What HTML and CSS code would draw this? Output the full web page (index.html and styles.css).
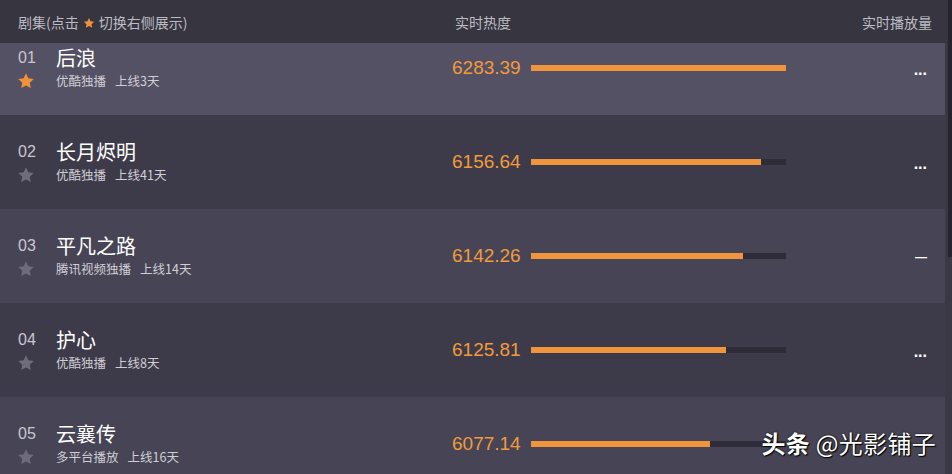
FILE: index.html
```html
<!DOCTYPE html>
<html lang="zh">
<head>
<meta charset="utf-8">
<title>剧集实时热度</title>
<link rel="stylesheet" href="styles.css">
</head>
<body>
<div class="board">
  <div class="head">
    <div class="h-name">剧集(点击<svg class="h-star" viewBox="0 0 24 24"><path d="M12 1.8l3.1 6.6 7.2.9-5.3 5 1.4 7.1L12 17.9l-6.4 3.5 1.4-7.1-5.3-5 7.2-.9z"/></svg>切换右侧展示)</div>
    <div class="h-heat">实时热度</div>
    <div class="h-play">实时播放量</div>
  </div>
  <div class="list">
    <div class="rows">
      <div class="row row-first row-sel">
        <div class="rank"><span class="num">01</span><svg class="star on" viewBox="0 0 24 24"><path d="M12 1.8l3.1 6.6 7.2.9-5.3 5 1.4 7.1L12 17.9l-6.4 3.5 1.4-7.1-5.3-5 7.2-.9z"/></svg></div>
        <div class="info"><div class="title">后浪</div><div class="sub">优酷独播<span class="days">上线3天</span></div></div>
        <div class="score">6283.39</div>
        <div class="bar"><div class="fill" style="width:255px"></div></div>
        <div class="play">...</div>
      </div>
      <div class="row row-even">
        <div class="rank"><span class="num">02</span><svg class="star" viewBox="0 0 24 24"><path d="M12 1.8l3.1 6.6 7.2.9-5.3 5 1.4 7.1L12 17.9l-6.4 3.5 1.4-7.1-5.3-5 7.2-.9z"/></svg></div>
        <div class="info"><div class="title">长月烬明</div><div class="sub">优酷独播<span class="days">上线41天</span></div></div>
        <div class="score">6156.64</div>
        <div class="bar"><div class="fill" style="width:230px"></div></div>
        <div class="play">...</div>
      </div>
      <div class="row row-odd">
        <div class="rank"><span class="num">03</span><svg class="star" viewBox="0 0 24 24"><path d="M12 1.8l3.1 6.6 7.2.9-5.3 5 1.4 7.1L12 17.9l-6.4 3.5 1.4-7.1-5.3-5 7.2-.9z"/></svg></div>
        <div class="info"><div class="title">平凡之路</div><div class="sub">腾讯视频独播<span class="days">上线14天</span></div></div>
        <div class="score">6142.26</div>
        <div class="bar"><div class="fill" style="width:212px"></div></div>
        <div class="play play-dash">—</div>
      </div>
      <div class="row row-even">
        <div class="rank"><span class="num">04</span><svg class="star" viewBox="0 0 24 24"><path d="M12 1.8l3.1 6.6 7.2.9-5.3 5 1.4 7.1L12 17.9l-6.4 3.5 1.4-7.1-5.3-5 7.2-.9z"/></svg></div>
        <div class="info"><div class="title">护心</div><div class="sub">优酷独播<span class="days">上线8天</span></div></div>
        <div class="score">6125.81</div>
        <div class="bar"><div class="fill" style="width:195px"></div></div>
        <div class="play">...</div>
      </div>
      <div class="row row-odd">
        <div class="rank"><span class="num">05</span><svg class="star" viewBox="0 0 24 24"><path d="M12 1.8l3.1 6.6 7.2.9-5.3 5 1.4 7.1L12 17.9l-6.4 3.5 1.4-7.1-5.3-5 7.2-.9z"/></svg></div>
        <div class="info"><div class="title">云襄传</div><div class="sub">多平台播放<span class="days">上线16天</span></div></div>
        <div class="score">6077.14</div>
        <div class="bar"><div class="fill" style="width:179px"></div></div>
        <div class="play"></div>
      </div>
    </div>
    <div class="track"></div>
  </div>
  <div class="thumb"></div>
  <div class="mark"><b>头条</b> @光影铺子</div>
</div>
</body>
</html>
```

FILE: styles.css
```css
* { box-sizing: border-box; }
html, body { margin: 0; padding: 0; }
body {
  width: 952px;
  height: 474px;
  overflow: hidden;
  background: #37353f;
  font-family: "Liberation Sans", "Noto Sans CJK SC", sans-serif;
}
.board {
  position: relative;
  width: 952px;
  height: 474px;
  display: flex;
  flex-direction: column;
}
.head {
  height: 43px;
  flex: none;
  display: flex;
  align-items: center;
  padding: 0 20px 0 18px;
  background: #37353f;
  color: #bdbcc4;
  font-family: "Noto Sans CJK SC", sans-serif;
  font-size: 14px;
}
.h-name { width: 437px; display: flex; align-items: center; }
.h-star { width: 12px; height: 12px; fill: #f0923a; margin: 2px 4px 0 4px; }
.h-heat { flex: 1; }
.h-play { text-align: right; }

.list {
  flex: 1;
  display: flex;
  overflow: hidden;
}
.rows {
  width: 945px;
  display: flex;
  flex-direction: column;
}
.track { flex: 1; background: #3a3845; }
.row {
  height: 94px;
  flex: none;
  display: flex;
  align-items: center;
  padding-left: 18px;
}
.row-first { margin-top: -22px; }
.row-sel { background: #535163; }
.row-even { background: #3d3b49; }
.row-odd { background: #474555; }

.rank {
  width: 38px;
  display: flex;
  flex-direction: column;
  align-self: center;
}
.num {
  height: 24px;
  line-height: 24px;
  font-size: 16px;
  color: #c8c7d0;
}
.star {
  width: 18px;
  height: 18px;
  margin-top: 2px;
  margin-left: -1px;
  fill: #6e6c7b;
}
.star.on { fill: #f0923a; }
.info {
  width: 396px;
  font-family: "Noto Sans CJK SC", sans-serif;
}
.title {
  height: 24px;
  line-height: 24px;
  font-size: 20px;
  color: #ffffff;
}
.sub {
  margin-top: 2px;
  height: 18px;
  line-height: 18px;
  font-size: 12.5px;
  color: #d0cfd6;
}
.days { margin-left: 9px; }
.score {
  width: 79px;
  font-size: 19px;
  color: #f29a3c;
  line-height: 24px;
}
.bar {
  width: 255px;
  height: 6px;
  background: #2e2c38;
}
.fill {
  height: 6px;
  background: #f0953b;
}
.play {
  flex: 1;
  text-align: right;
  padding-right: 18px;
  font-size: 16px;
  font-weight: bold;
  color: #ffffff;
  line-height: 24px;
  padding-top: 4px;
}
.play-dash {
  font-size: 12px;
  font-weight: bold;
  padding-top: 2px;
}
.thumb {
  position: absolute;
  top: 0;
  right: 0;
  width: 4px;
  height: 257px;
  background: #25232d;
}
.mark {
  position: absolute;
  right: 16px;
  top: 431px;
  font-family: "Noto Sans CJK SC", sans-serif;
  font-size: 24px;
  line-height: 24px;
  color: #ffffff;
  letter-spacing: 0.3px;
  text-shadow: 1px 1px 1px #000, 0 0 2px #000;
}
.mark b { font-weight: 700; }
```
